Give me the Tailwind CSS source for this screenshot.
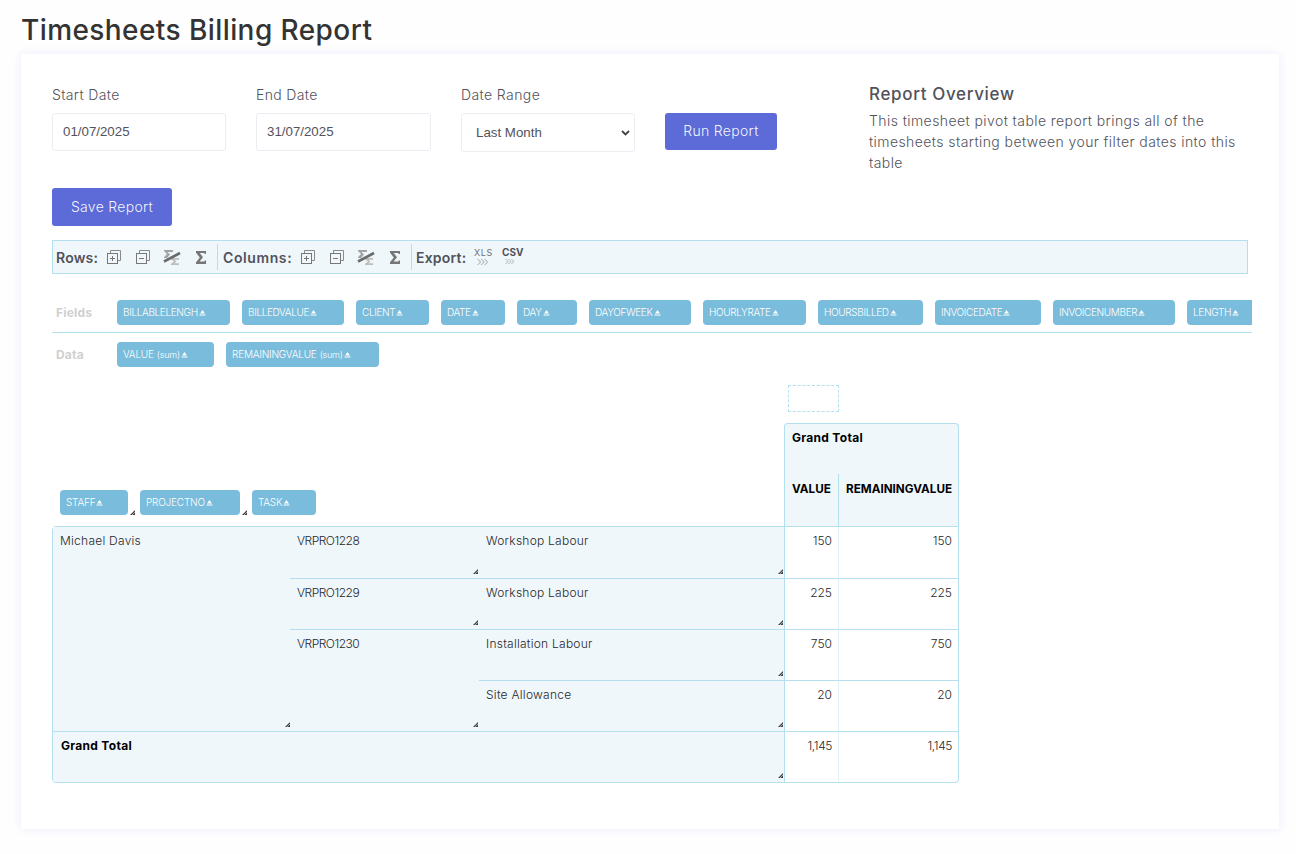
<!DOCTYPE html>
<html lang="en">
<head>
    <meta charset="UTF-8">
    <meta name="viewport" content="width=device-width, initial-scale=1.0">
    <title>Timesheets Billing Report</title>
    <script src="https://cdn.jsdelivr.net/npm/@tailwindcss/browser@4"></script>
</head>
<body class="bg-[#fefeff] text-[#3f3f46] font-['Inter',sans-serif] min-h-screen overflow-hidden">
<svg class="hidden">
    <symbol id="caret" viewBox="0 0 7 6"><path d="M3.5 0L6 3.500H1z M0.5 4.500h6v1h-6z" fill="currentColor"/></symbol>
    <symbol id="grip" viewBox="0 0 5 5"><path d="M0 5L5 0v5z" fill="#444"/><path d="M2 5L5 2" stroke="#eee" stroke-width=".6"/></symbol>
    <symbol id="expand" viewBox="0 0 14 14"><path d="M3.500 3V.5h10v10H11" fill="none" stroke="#8a8a8a"/><rect x=".5" y="3.500" width="10" height="10" fill="#eff7fb" stroke="#777"/><path d="M5.500 6v5M3 8.500h5" stroke="#777"/></symbol>
    <symbol id="collapse" viewBox="0 0 14 14"><path d="M3.500 3V.5h10v10H11" fill="none" stroke="#8a8a8a"/><rect x=".5" y="3.500" width="10" height="10" fill="#eff7fb" stroke="#777"/><path d="M3 8.500h5" stroke="#777"/></symbol>
    <symbol id="nosum" viewBox="0 0 18 15"><path d="M1 0h9v2H4.500l2.500 2.500L4 8H1v-.8l3-3.200L1 1z" fill="#a3a3a3"/><path d="M8 8h8v1.800h-4.500l2 1.700-2 1.700H16V15H8v-1.200l3-2.300-3-2.300z" fill="#bdbdbd"/><path d="M1 11.500L17 3" stroke="#6b6b6b" stroke-width="2.600"/></symbol>
    <symbol id="sum" viewBox="0 0 10 13"><path d="M0 0h10v3H8.700L8.300 2H3.800L7 6.300 3.600 10.600h4.700l.5-1.100H10V13H0v-1.800l3.800-4.800L0 1.800z" fill="#777"/></symbol>
    <symbol id="chev" viewBox="0 0 12 6"><path d="M0 0l3 3-3 3h1.200l3-3-3-3zM3.500 0l3 3-3 3h1.200l3-3-3-3zM7 0l3 3-3 3h1.200l3-3-3-3z" fill="#b0b0b0"/></symbol>
</svg>

<h1 class="text-[28px] leading-[36px] font-[450] text-[#333] pt-[12px] pl-[21px] h-[54px] tracking-[0.42px]">Timesheets Billing Report</h1>

<main class="mx-[21px] w-[1258px] h-[775px] bg-white shadow-[0_0_8px_rgba(120,120,220,0.14)] pt-[29px] px-[31px]">
    <!-- filters -->
    <section class="flex h-[105px]">
        <div class="w-[174px] mr-[30px]">
            <label class="block text-[14px] leading-[24px] font-light tracking-[0.35px] text-[#52525b] mb-[6px]">Start Date</label>
            <input value="01/07/2025" class="w-full h-[38px] px-[10px] pb-[2px] border border-[#ebedf2] rounded-[3px] text-[13.3px] font-['Liberation_Sans',sans-serif] text-[#52525b]">
        </div>
        <div class="w-[175px] mr-[30px]">
            <label class="block text-[14px] leading-[24px] font-light tracking-[0.35px] text-[#52525b] mb-[6px]">End Date</label>
            <input value="31/07/2025" class="w-full h-[38px] px-[10px] pb-[2px] border border-[#ebedf2] rounded-[3px] text-[13.3px] font-['Liberation_Sans',sans-serif] text-[#52525b]">
        </div>
        <div class="w-[174px] mr-[30px]">
            <label class="block text-[14px] leading-[24px] font-light tracking-[0.4px] text-[#52525b] mb-[6px]">Date Range</label>
            <div class="relative h-[39px] border border-[#ebedf2] rounded-[3px] flex items-center pl-[14px] text-[13.3px] font-['Liberation_Sans',sans-serif] text-[#52525b]">
                Last Month
                <svg class="absolute right-[4px] top-[16px] w-[9px] h-[6px]" viewBox="0 0 9 6"><path d="M1 1l3.500 3.500L8 1" fill="none" stroke="#444" stroke-width="1.800"/></svg>
            </div>
        </div>
        <button class="w-[112px] h-[37px] mt-[30px] pb-[2px] bg-[#5c6bd7] text-white/95 text-[14px] font-light tracking-[0.3px] rounded-[3px]">Run Report</button>
        <div class="ml-[92px] w-[379px]">
            <h2 class="text-[17px] leading-[24px] font-medium tracking-[0.65px] text-[#52525b] -mt-[1px]">Report Overview</h2>
            <p class="text-[14px] leading-[21px] font-light tracking-[0.42px] text-[#52525b] mt-[4px]">This timesheet pivot table report brings all of the timesheets starting between your filter dates into this table</p>
        </div>
    </section>

    <button class="block w-[120px] h-[38px] pb-[2px] bg-[#5c6bd7] text-white/95 text-[14px] font-light tracking-[0.3px] rounded-[3px]">Save Report</button>

    <!-- toolbar -->
    <div class="mt-[14px] w-[1196px] h-[34px] bg-[#eff7fb] border border-[#b3dfee] flex items-center pl-[3px] font-semibold text-[14px] tracking-[0.2px] text-[#52525b]">
        <div class="flex items-center w-[162px] border-r border-[#b3dfee] h-[26px]">
            <span class="w-[51px]">Rows:</span>
            <svg class="w-[14px] h-[14px] mr-[15px]"><use href="#expand"/></svg>
            <svg class="w-[14px] h-[14px] mr-[13px]"><use href="#collapse"/></svg>
            <svg class="w-[18px] h-[15px] mr-[15px]"><use href="#nosum"/></svg>
            <svg class="w-[10px] h-[13px]"><use href="#sum"/></svg>
        </div>
        <div class="flex items-center w-[194px] pl-[5px] border-r border-[#b3dfee] h-[26px]">
            <span class="w-[78px] tracking-[0.6px]">Columns:</span>
            <svg class="w-[14px] h-[14px] mr-[15px]"><use href="#expand"/></svg>
            <svg class="w-[14px] h-[14px] mr-[13px]"><use href="#collapse"/></svg>
            <svg class="w-[18px] h-[15px] mr-[15px]"><use href="#nosum"/></svg>
            <svg class="w-[10px] h-[13px]"><use href="#sum"/></svg>
        </div>
        <div class="flex items-center pl-[4px] h-[26px]">
            <span class="w-[58px]">Export:</span>
            <div class="w-[28px] -mt-[2px] flex flex-col items-start text-[9px] leading-[9px] font-normal tracking-[0.6px] text-[#71717a]">XLS<svg class="w-[12px] h-[6px] ml-[3px] mt-[2px]"><use href="#chev"/></svg></div>
            <div class="-mt-[2px] flex flex-col items-start text-[10px] leading-[9px] font-bold tracking-normal text-[#52525b]">CSV<svg class="w-[10px] h-[5px] ml-[3px] mt-[2px]"><use href="#chev"/></svg></div>
        </div>
    </div>

    <!-- field pills -->
    <div class="mt-[26px] w-[1200px] h-[33px] border-b border-[#b3dfee] flex overflow-hidden">
        <span class="w-[65px] shrink-0 pl-[4px] pt-[6px] text-[12px] leading-[14px] font-bold tracking-[0.2px] text-[#d0d0d0]">Fields</span>
        <div class="flex gap-[12px] h-[25px] text-[10px] font-light tracking-[-0.35px] text-white">
            <span class="shrink-0 w-[113px] rounded-[4px] bg-[#7abcdb] pl-[6px] flex items-center gap-[1px]">BILLABLELENGH<svg class="w-[7px] h-[6px]"><use href="#caret"/></svg></span>
            <span class="shrink-0 w-[102px] rounded-[4px] bg-[#7abcdb] pl-[6px] flex items-center gap-[1px]">BILLEDVALUE<svg class="w-[7px] h-[6px]"><use href="#caret"/></svg></span>
            <span class="shrink-0 w-[73px] rounded-[4px] bg-[#7abcdb] pl-[6px] flex items-center gap-[1px]">CLIENT<svg class="w-[7px] h-[6px]"><use href="#caret"/></svg></span>
            <span class="shrink-0 w-[64px] rounded-[4px] bg-[#7abcdb] pl-[6px] flex items-center gap-[1px]">DATE<svg class="w-[7px] h-[6px]"><use href="#caret"/></svg></span>
            <span class="shrink-0 w-[60px] rounded-[4px] bg-[#7abcdb] pl-[6px] flex items-center gap-[1px]">DAY<svg class="w-[7px] h-[6px]"><use href="#caret"/></svg></span>
            <span class="shrink-0 w-[102px] rounded-[4px] bg-[#7abcdb] pl-[6px] flex items-center gap-[1px]">DAYOFWEEK<svg class="w-[7px] h-[6px]"><use href="#caret"/></svg></span>
            <span class="shrink-0 w-[103px] rounded-[4px] bg-[#7abcdb] pl-[6px] flex items-center gap-[1px]">HOURLYRATE<svg class="w-[7px] h-[6px]"><use href="#caret"/></svg></span>
            <span class="shrink-0 w-[105px] rounded-[4px] bg-[#7abcdb] pl-[6px] flex items-center gap-[1px]">HOURSBILLED<svg class="w-[7px] h-[6px]"><use href="#caret"/></svg></span>
            <span class="shrink-0 w-[106px] rounded-[4px] bg-[#7abcdb] pl-[6px] flex items-center gap-[1px]">INVOICEDATE<svg class="w-[7px] h-[6px]"><use href="#caret"/></svg></span>
            <span class="shrink-0 w-[122px] rounded-[4px] bg-[#7abcdb] pl-[6px] flex items-center gap-[1px]">INVOICENUMBER<svg class="w-[7px] h-[6px]"><use href="#caret"/></svg></span>
            <span class="shrink-0 w-[90px] rounded-[4px] bg-[#7abcdb] pl-[6px] flex items-center gap-[1px]">LENGTH<svg class="w-[7px] h-[6px]"><use href="#caret"/></svg></span>
        </div>
    </div>
    <div class="mt-[9px] h-[25px] flex">
        <span class="w-[65px] pl-[4px] pt-[6px] text-[12px] leading-[14px] font-bold tracking-[0.2px] text-[#d0d0d0]">Data</span>
        <div class="flex gap-[12px] text-[10px] font-light tracking-[-0.2px] text-white">
            <span class="w-[97px] rounded-[4px] bg-[#7abcdb] pl-[6px] flex items-center gap-[1px]">VALUE <small class="text-[9px] ml-[2px]">(sum)</small><svg class="w-[7px] h-[6px]"><use href="#caret"/></svg></span>
            <span class="w-[153px] rounded-[4px] bg-[#7abcdb] pl-[6px] flex items-center gap-[1px]">REMAININGVALUE <small class="text-[9px] ml-[2px]">(sum)</small><svg class="w-[7px] h-[6px]"><use href="#caret"/></svg></span>
        </div>
    </div>

    <!-- pivot -->
    <div class="ml-[736px] mt-[18px] w-[51px] h-[27px] border border-dashed border-[#b3dfee]"></div>
    <div class="mt-[11px] w-[907px] flex items-end h-[103px]">
        <div class="w-[732px] flex pl-[8px] pb-[11px] gap-[12px] text-[10px] font-light tracking-[-0.2px] text-white">
            <span class="relative w-[68px] h-[25px] rounded-[4px] bg-[#7abcdb] pl-[6px] flex items-center gap-[1px]">STAFF<svg class="w-[7px] h-[6px]"><use href="#caret"/></svg><svg class="absolute -right-[7px] bottom-0 w-[5px] h-[5px]"><use href="#grip"/></svg></span>
            <span class="relative w-[100px] h-[25px] rounded-[4px] bg-[#7abcdb] pl-[6px] flex items-center gap-[1px]">PROJECTNO<svg class="w-[7px] h-[6px]"><use href="#caret"/></svg><svg class="absolute -right-[7px] bottom-0 w-[5px] h-[5px]"><use href="#grip"/></svg></span>
            <span class="w-[64px] h-[25px] rounded-[4px] bg-[#7abcdb] pl-[6px] flex items-center gap-[1px]">TASK<svg class="w-[7px] h-[6px]"><use href="#caret"/></svg></span>
        </div>
        <div class="w-[175px] h-[103px] bg-[#eff7fb] border border-b-0 border-[#b3dfee] rounded-t-[4px] text-black font-bold text-[11.7px]">
            <div class="h-[50px] pl-[7px] pt-[7px] leading-[14px] text-[12px] tracking-[0.3px]">Grand Total</div>
            <div class="flex h-[52px]">
                <div class="w-[54px] border-r border-[#b3dfee] pl-[7px] pt-[8px] leading-[14px]">VALUE</div>
                <div class="pl-[7px] pt-[8px] leading-[14px]">REMAININGVALUE</div>
            </div>
        </div>
    </div>
    <div class="w-[907px] border border-[#b3dfee] rounded-b-[4px] rounded-tl-[4px] grid grid-cols-[237px_189px_305px_55px_119px] grid-rows-[52px_51px_51px_51px_50px] text-[12px] leading-[16px] font-light tracking-[0.25px] text-[#27272a] bg-white">
        <div class="relative row-span-4 bg-[#eff7fb] pl-[7px] pt-[6px] border-b border-[#b3dfee]">Michael Davis<svg class="absolute right-0 bottom-[4px] w-[5px] h-[5px]"><use href="#grip"/></svg></div>
        <div class="relative bg-[#eff7fb] pl-[7px] pt-[6px] border-b border-[#b3dfee] tracking-[-0.5px]">VRPRO1228<svg class="absolute right-[1px] bottom-[4px] w-[5px] h-[5px]"><use href="#grip"/></svg></div>
        <div class="relative bg-[#eff7fb] pl-[7px] pt-[6px] border-b border-[#b3dfee]">Workshop Labour<svg class="absolute right-[1px] bottom-[4px] w-[5px] h-[5px]"><use href="#grip"/></svg></div>
        <div class="border-l border-r border-b border-l-[#b3dfee] border-r-[#dff0f7] border-b-[#b3dfee] text-right pr-[6px] pt-[6px] tracking-normal">150</div>
        <div class="border-b border-[#b3dfee] text-right pr-[6px] pt-[6px] tracking-normal">150</div>

        <div class="relative bg-[#eff7fb] pl-[7px] pt-[6px] border-b border-[#b3dfee] tracking-[-0.5px]">VRPRO1229<svg class="absolute right-[1px] bottom-[4px] w-[5px] h-[5px]"><use href="#grip"/></svg></div>
        <div class="relative bg-[#eff7fb] pl-[7px] pt-[6px] border-b border-[#b3dfee]">Workshop Labour<svg class="absolute right-[1px] bottom-[4px] w-[5px] h-[5px]"><use href="#grip"/></svg></div>
        <div class="border-l border-r border-b border-l-[#b3dfee] border-r-[#dff0f7] border-b-[#b3dfee] text-right pr-[6px] pt-[6px] tracking-normal">225</div>
        <div class="border-b border-[#b3dfee] text-right pr-[6px] pt-[6px] tracking-normal">225</div>

        <div class="relative row-span-2 bg-[#eff7fb] pl-[7px] pt-[6px] border-b border-[#b3dfee] tracking-[-0.5px]">VRPRO1230<svg class="absolute right-[1px] bottom-[4px] w-[5px] h-[5px]"><use href="#grip"/></svg></div>
        <div class="relative bg-[#eff7fb] pl-[7px] pt-[6px] border-b border-[#b3dfee]">Installation Labour<svg class="absolute right-[1px] bottom-[4px] w-[5px] h-[5px]"><use href="#grip"/></svg></div>
        <div class="border-l border-r border-b border-l-[#b3dfee] border-r-[#dff0f7] border-b-[#b3dfee] text-right pr-[6px] pt-[6px] tracking-normal">750</div>
        <div class="border-b border-[#b3dfee] text-right pr-[6px] pt-[6px] tracking-normal">750</div>

        <div class="relative bg-[#eff7fb] pl-[7px] pt-[6px] border-b border-[#b3dfee]">Site Allowance<svg class="absolute right-[1px] bottom-[4px] w-[5px] h-[5px]"><use href="#grip"/></svg></div>
        <div class="border-l border-r border-b border-l-[#b3dfee] border-r-[#dff0f7] border-b-[#b3dfee] text-right pr-[6px] pt-[6px] tracking-normal">20</div>
        <div class="border-b border-[#b3dfee] text-right pr-[6px] pt-[6px] tracking-normal">20</div>

        <div class="relative col-span-3 bg-[#eff7fb] rounded-bl-[4px] pl-[8px] pt-[6px] font-bold tracking-[0.3px] text-black">Grand Total<svg class="absolute right-[1px] bottom-[4px] w-[5px] h-[5px]"><use href="#grip"/></svg></div>
        <div class="border-l border-r border-l-[#b3dfee] border-r-[#dff0f7] text-right pr-[6px] pt-[6px] tracking-[-0.4px]">1,145</div>
        <div class="text-right pr-[6px] pt-[6px] tracking-[-0.4px]">1,145</div>
    </div>
</main>
</body>
</html>
